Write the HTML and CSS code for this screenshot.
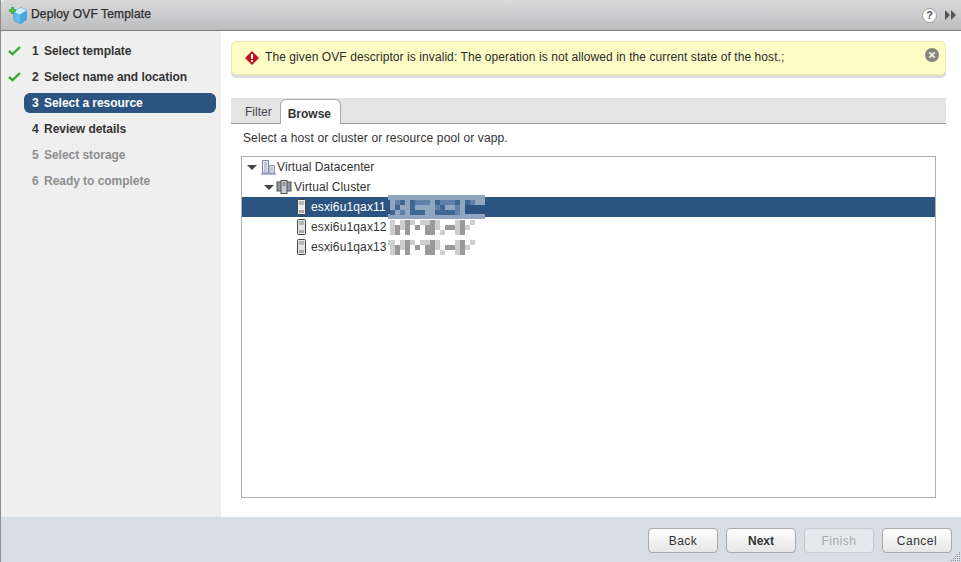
FILE: index.html
```html
<!DOCTYPE html>
<html lang="en">
<head>
<meta charset="utf-8">
<title>Deploy OVF Template</title>
<link rel="stylesheet" href="styles.css">
</head>
<body>
<div class="dialog">
  <header class="titlebar">
    <svg class="cube" width="22" height="22" viewBox="0 0 22 22">
      <path d="M5.500 7.500L13 3.500l5.500 3v9L12 20l-6-3.500z" fill="#62bbea" stroke="#3b8cc4" stroke-width=".6"/>
      <path d="M5.500 7.500L13 3.500l5.500 3-6.500 4z" fill="#c8ecfa"/>
      <path d="M12 10.500l6.500-4v9L12 20z" fill="#4aa6dd"/>
      <path d="M3.500 3.500h2v2h2v2h-2v2h-2v-2h-2v-2h2z" fill="#52d044" stroke="#1e8a28" stroke-width=".6"/>
    </svg>
    <h1 class="title">Deploy OVF Template</h1>
    <span class="help">?</span>
    <svg class="collapse" width="11" height="10" viewBox="0 0 11 10"><path d="M0 0l5 5-5 5zM6 0l5 5-5 5z" fill="#555"/></svg>
  </header>
  <div class="main">
    <nav class="steps">
      <div class="step done"><svg class="check" width="13" height="10" viewBox="0 0 13 10"><path d="M1 5l3.500 3.200L12 1" fill="none" stroke="#3aaa35" stroke-width="2.400"/></svg><span class="num">1</span>Select template</div>
      <div class="step done"><svg class="check" width="13" height="10" viewBox="0 0 13 10"><path d="M1 5l3.500 3.200L12 1" fill="none" stroke="#3aaa35" stroke-width="2.400"/></svg><span class="num">2</span>Select name and location</div>
      <div class="step active"><span class="num">3</span>Select a resource</div>
      <div class="step"><span class="num">4</span>Review details</div>
      <div class="step off"><span class="num">5</span>Select storage</div>
      <div class="step off"><span class="num">6</span>Ready to complete</div>
    </nav>
    <section class="content">
      <div class="alert">
        <svg class="err" width="14" height="14" viewBox="0 0 14 14"><path d="M7 0l7 7-7 7-7-7z" fill="#c8101c"/><rect x="6" y="3" width="2" height="5" fill="#fff"/><rect x="6" y="9" width="2" height="2" fill="#fff"/></svg>
        <span class="alert-text">The given OVF descriptor is invalid: The operation is not allowed in the current state of the host.;</span>
        <svg class="close" width="14" height="14" viewBox="0 0 14 14"><circle cx="7" cy="7" r="7" fill="#85857a"/><path d="M4.300 4.300l5.400 5.400M9.700 4.300l-5.400 5.400" stroke="#eee" stroke-width="1.800"/></svg>
      </div>
      <div class="tabs">
        <span class="tab">Filter</span>
        <span class="tab current">Browse</span>
      </div>
      <p class="hint">Select a host or cluster or resource pool or vapp.</p>
      <div class="tree">
        <div class="row lvl0">
          <span class="arrow"></span>
          <svg class="ticon" width="16" height="16" viewBox="0 0 16 16"><path d="M2.500 14V1.500h6V14z" fill="#e8ebf2" stroke="#7d84a8"/><path d="M9 6.500h5.500V14H9z" fill="#e0e3ea" stroke="#8a8fa8"/><path d="M4 4h3M4 6h3M4 8h3M4 10h3M4 12h3M10.500 9h2.500M10.500 11h2.500" stroke="#9aa0b8"/><path d="M1 15h15" stroke="#6a70a0"/></svg>
          <span>Virtual Datacenter</span>
        </div>
        <div class="row lvl1">
          <span class="arrow"></span>
          <svg class="ticon" width="16" height="16" viewBox="0 0 16 16"><rect x="1" y="3" width="5" height="9" fill="#8b96a0" stroke="#555"/><rect x="10" y="3" width="5" height="9" fill="#8b96a0" stroke="#555"/><rect x="5" y="1.500" width="6" height="13" fill="#c9ced3" stroke="#555"/><path d="M6.500 4h3M6.500 6h3" stroke="#666"/></svg>
          <span>Virtual Cluster</span>
        </div>
        <div class="row lvl2 selected">
          <svg class="ticon" width="11" height="16" viewBox="0 0 11 16"><rect x="1.500" y=".5" width="8" height="15" rx="1" fill="#ececec" stroke="#444"/><path d="M3 3h5M3 5h5" stroke="#888"/><rect x="3" y="11" width="5" height="3" fill="#aaa"/></svg>
          <span class="host">esxi6u1qax11</span>
          <svg class="mosaic" width="97" height="24" viewBox="0 0 97 24">
            <path fill="#8fa6c0" d="M0 0h97v5H0zM0 19h97v5H0zM2 5h5v5H2zM17 5h5v5h-5zM42 5h5v5h-5zM72 5h5v5h-5zM87 5h10v5H87zM2 10h5v5H2zM12 10h10v5H12zM27 10h20v5H27zM57 10h10v5H57zM72 10h5v5h-5zM7 15h5v5H7zM17 15h5v5h-5zM37 15h10v5H37zM72 15h5v5h-5z"/>
            <path fill="#5f80a8" d="M7 5h5v5H7zM27 5h15v5H27zM52 5h15v5H52zM82 5h5v5h-5zM47 10h5v5h-5zM67 10h5v5h-5zM12 15h5v5h-5zM67 15h5v5h-5z"/>
            <path fill="#3f6792" d="M12 5h5v5h-5zM22 5h5v5h-5zM47 5h5v5h-5zM67 5h5v5h-5zM77 5h5v5h-5zM7 10h5v5H7zM22 10h5v5h-5zM52 10h5v5h-5zM2 15h5v5H2zM22 15h15v5H22zM47 15h20v5H47z"/>
          </svg>
        </div>
        <div class="row lvl2">
          <svg class="ticon" width="11" height="16" viewBox="0 0 11 16"><rect x="1.500" y=".5" width="8" height="15" rx="1" fill="#e4e4e4" stroke="#444"/><path d="M3 3h5M3 5h5" stroke="#888"/><rect x="3" y="11" width="5" height="3" fill="#aaa"/></svg>
          <span class="host">esxi6u1qax12</span>
          <svg class="mosaic grey" width="87" height="15" viewBox="0 0 87 15">
            <path fill="#cecece" d="M2 0h5v5H2zM12 0h5v5h-5zM22 0h5v5h-5zM32 0h10v5H32zM47 0h5v5h-5zM67 0h5v5h-5zM82 0h5v5h-5zM2 5h5v5H2zM12 5h5v5h-5zM47 5h5v5h-5zM67 5h5v5h-5zM77 5h5v5h-5zM2 10h5v5H2zM52 10h5v5h-5zM67 10h5v5h-5z"/>
            <path fill="#9a9a9a" d="M17 0h5v5h-5zM42 0h5v5h-5zM72 0h5v5h-5zM7 5h5v5H7zM17 5h5v5h-5zM27 5h5v5h-5zM37 5h10v5H37zM57 5h10v5H57zM72 5h5v5h-5zM7 10h5v5H7zM17 10h5v5h-5zM37 10h10v5H37zM72 10h5v5h-5z"/>
          </svg>
        </div>
        <div class="row lvl2">
          <svg class="ticon" width="11" height="16" viewBox="0 0 11 16"><rect x="1.500" y=".5" width="8" height="15" rx="1" fill="#e4e4e4" stroke="#444"/><path d="M3 3h5M3 5h5" stroke="#888"/><rect x="3" y="11" width="5" height="3" fill="#aaa"/></svg>
          <span class="host">esxi6u1qax13</span>
          <svg class="mosaic grey" width="87" height="15" viewBox="0 0 87 15">
            <path fill="#cecece" d="M0 0h7v5H0zM12 0h5v5h-5zM22 0h5v5h-5zM32 0h10v5H32zM47 0h5v5h-5zM67 0h5v5h-5zM82 0h5v5h-5zM2 5h5v5H2zM12 5h5v5h-5zM47 5h5v5h-5zM67 5h5v5h-5zM77 5h5v5h-5zM2 10h5v5H2zM52 10h5v5h-5zM67 10h5v5h-5z"/>
            <path fill="#9a9a9a" d="M17 0h5v5h-5zM42 0h5v5h-5zM72 0h5v5h-5zM7 5h5v5H7zM17 5h5v5h-5zM27 5h5v5h-5zM37 5h10v5H37zM57 5h10v5H57zM72 5h5v5h-5zM7 10h5v5H7zM17 10h5v5h-5zM37 10h10v5H37zM72 10h5v5h-5z"/>
          </svg>
        </div>
      </div>
    </section>
  </div>
  <footer class="footer">
    <button class="btn">Back</button>
    <button class="btn primary">Next</button>
    <button class="btn" disabled>Finish</button>
    <button class="btn">Cancel</button>
    <svg class="grip" width="12" height="12" viewBox="0 0 12 12"><path d="M10 2h1v1h-1zM8 4h1v1H8zM10 4h1v1h-1zM6 6h1v1H6zM8 6h1v1H8zM10 6h1v1h-1zM4 8h1v1H4zM6 8h1v1H6zM8 8h1v1H8zM10 8h1v1h-1zM2 10h1v1H2zM4 10h1v1H4zM6 10h1v1H6zM8 10h1v1H8zM10 10h1v1h-1z" fill="#8a8f96"/></svg>
  </footer>
</div>
</body>
</html>
```
FILE: styles.css
```css
* { box-sizing: border-box; }
html, body { margin: 0; height: 100%; overflow: hidden; }
body { background: #fff; font-family: "Liberation Sans", Arial, sans-serif; font-size: 12px; color: #333; }
.dialog { width: 961px; height: 562px; display: flex; flex-direction: column; border-left: 1px solid #8c8c8c; }
.titlebar { height: 31px; flex: none; display: flex; align-items: center; padding: 0 5px 0 7px; background: linear-gradient(#d9d9da, #bcbdbf); border-bottom: 1px solid #7e7e7e; border-top-left-radius: 4px; }
.cube { flex: none; margin-right: 1px; }
.title { margin: 0 0 2px; font-size: 12px; font-weight: normal; color: #2a2a2a; flex: 1; letter-spacing: .15px; -webkit-text-stroke: .25px #2a2a2a; }
.help { width: 15px; height: 15px; border-radius: 50%; background: #fff; border: 1px solid #9a9a9a; font-size: 11px; font-weight: bold; color: #555; display: flex; align-items: center; justify-content: center; margin-right: 8px; }
.collapse { flex: none; }
.main { flex: 1; display: flex; min-height: 0; }
.steps { width: 220px; flex: none; background: #efefef; padding: 7px 5px 0 23px; letter-spacing: -.04px; }
.step { position: relative; height: 26px; display: flex; align-items: center; padding-left: 8px; font-weight: bold; color: #333; border-radius: 6px; white-space: nowrap; }
.step .num { width: 12px; text-align: left; flex: none; }
.check { position: absolute; left: -16px; top: 8px; }
.step.active { height: 20px; margin: 3px 0; background: #2c5480; color: #fff; }
.step.off { color: #8e8e8e; }
.content { flex: 1; min-width: 0; padding: 10px 15px 19px 10px; display: flex; flex-direction: column; }
.alert { height: 34px; flex: none; display: flex; align-items: center; gap: 6px; padding: 0 6px 0 13px; background: #fdfdc8; border: 1px solid #ece9a6; border-radius: 5px; box-shadow: 0 3px 0 #dcdcdc; color: #2b2b2b; letter-spacing: .08px; }
.err { flex: none; }
.alert-text { flex: 1; margin-bottom: 3px; }
.close { flex: none; margin-bottom: 6px; }
.tabs { margin-top: 23px; height: 26px; flex: none; display: flex; align-items: flex-end; padding-left: 5px; background: #e4e4e4; border-bottom: 1px solid #999; }
.tab { height: 24px; padding: 2px 8px 0 9px; display: flex; align-items: center; color: #444; }
.tab.current { height: 25px; margin-bottom: -1px; padding: 3px 8px 0 7px; width: 61px; background: #fff; border: 1px solid #aaa; border-bottom: none; border-radius: 6px 6px 0 0; font-weight: bold; color: #333; }
.hint { margin: 7px 0 11px 12px; line-height: 14px; color: #333; letter-spacing: .12px; }
.tree { flex: 1; min-height: 0; margin: 0 10px; border: 1px solid #adadad; }
.row { height: 20px; display: flex; align-items: center; position: relative; letter-spacing: .09px; white-space: nowrap; color: #333; }
.lvl0 { padding-left: 5px; }
.lvl1 { padding-left: 22px; }
.lvl2 { padding-left: 54px; }
.arrow { width: 0; height: 0; border: 5px solid transparent; border-top: 5px solid #444; border-bottom: none; margin-right: 2px; flex: none; }
.lvl0 .arrow { margin-right: 3px; }
.ticon { flex: none; margin-right: 2px; }
.lvl0 .ticon { margin-right: 1px; }
.lvl2 .ticon { margin-right: 4px; }
.selected { background: #2c5480; color: #fff; }
.host { letter-spacing: .13px; }
.mosaic { position: absolute; left: 146px; top: -2px; }
.mosaic.grey { top: 3px; }
.footer { height: 45px; flex: none; position: relative; display: flex; align-items: center; justify-content: flex-end; gap: 8px; padding: 2px 9px 0 0; background: #d9dde4; }
.btn { width: 70px; height: 25px; padding: 0; font: 12px "Liberation Sans", Arial, sans-serif; letter-spacing: .5px; color: #333; background: linear-gradient(#fdfdfd, #e6e6e6); border: 1px solid #a9a9a9; border-radius: 4px; }
.btn.primary { font-weight: bold; letter-spacing: 0; }
.btn:disabled { color: #a8a8a8; background: #e6e9ec; border-color: #c5c8cc; }
.grip { position: absolute; right: 0; bottom: 0; }
```
